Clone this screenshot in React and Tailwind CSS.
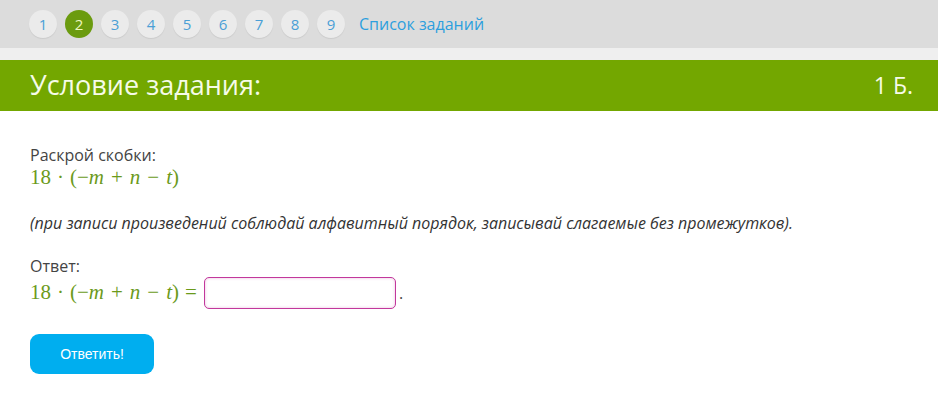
import React from 'react';

const pages = [1, 2, 3, 4, 5, 6, 7, 8, 9];

// KaTeX-like expression, rendered with a serif family
const Expr = ({ withEq }) => (
  <span className="whitespace-nowrap text-[21px] text-[#6b9a1b]" style={{ fontFamily: '"Liberation Serif", "DejaVu Serif", serif' }}>
    18<span className="mx-[6px]">·</span>(−<i>m</i>
    <span className="mx-[7px]">+</span>
    <i>n</i>
    <span className="mx-[7px]">−</span>
    <i>t</i>)
    {withEq && <span className="ml-[6px]">=</span>}
  </span>
);

export default function App() {
  return (
    <div className="min-h-[404px] bg-white" style={{ fontFamily: '"Open Sans", "Noto Sans", sans-serif' }}>
      {/* task navigation */}
      <div className="h-[48px] bg-[#dcdcdc] flex items-center pl-[29px] gap-[8px]">
        {pages.map((n) => (
          <div
            key={n}
            className={
              n === 2
                ? 'w-[28px] h-[28px] rounded-full bg-[#6b9b0f] text-[#eef7c0] text-[15px] flex items-center justify-center'
                : 'w-[28px] h-[28px] rounded-full bg-[#ebebeb] text-[#4a9fd6] text-[15px] flex items-center justify-center shadow-[0_1px_1px_rgba(0,0,0,0.08)]'
            }
          >
            {n}
          </div>
        ))}
        <a className="ml-[6px] text-[16px] text-[#2d9fde]">Список заданий</a>
      </div>
      <div className="h-[12px] bg-[#efefef]" />

      {/* header */}
      <div className="h-[51px] bg-[#73a700] flex items-center justify-between pl-[30px] pr-[25px] text-[#f6fbe8]">
        <h1 className="text-[27px]">Условие задания:</h1>
        <span className="text-[23px]">1 Б.</span>
      </div>

      {/* body */}
      <div className="px-[30px] pt-[34px] text-[16px] text-[#444]">
        <div className="leading-[20px]">Раскрой скобки:</div>
        <div className="leading-[24px]"><Expr /></div>
        <p className="mt-[23px] italic text-[#333] leading-[20px]">
          (при записи произведений соблюдай алфавитный порядок, записывай слагаемые без промежутков).
        </p>
        <div className="mt-[23px] leading-[20px]">Ответ:</div>
        <div className="flex items-center mt-[1px]">
          <Expr withEq />
          <input
            className="ml-[7px] w-[192px] h-[32px] rounded-[5px] border border-[#c2389c] shadow-[inset_0_0_3px_rgba(194,56,156,0.35)] outline-none"
          />
          <span className="ml-[3px] text-[#444]">.</span>
        </div>
        <button
          className="mt-[25px] w-[124px] h-[40px] rounded-[9px] bg-[#00aeef] text-white text-[14px]"
          style={{ fontFamily: '"Liberation Sans", Arial, sans-serif' }}
        >
          Ответить!
        </button>
      </div>
    </div>
  );
}
